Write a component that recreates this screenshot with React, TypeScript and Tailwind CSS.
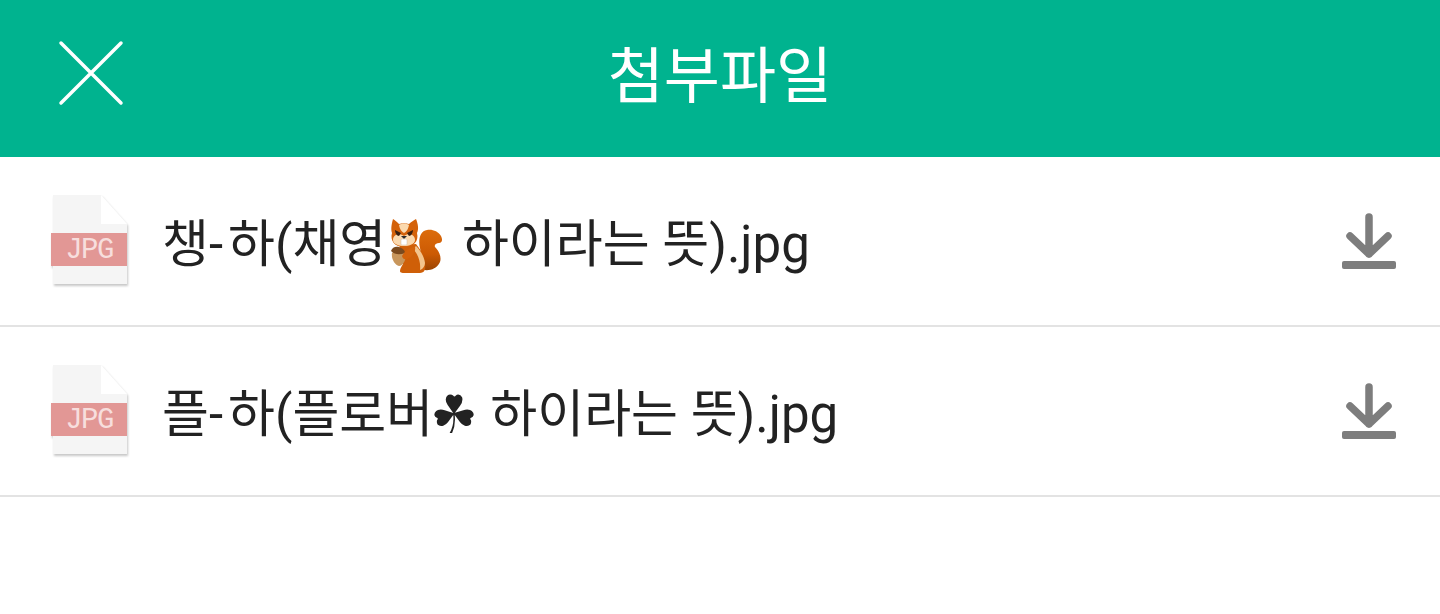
const kr = "font-['Roboto','Noto_Sans_CJK_KR',sans-serif]";

function FileIcon() {
  return (
    <div className="relative h-[92px] w-[80px] shrink-0">
      <svg width="80" height="92" viewBox="0 0 80 92" className="absolute left-0 top-0 drop-shadow-[1px_2px_1px_rgba(0,0,0,0.22)]">
        <path d="M3 0H51L77 29V89H3Z" fill="#f5f5f5" />
        <path d="M51 0L77 29H51Z" fill="#ffffff" />
        <rect x="1" y="38" width="76" height="33" fill="#e29795" />
      </svg>
      <span className="absolute left-0 top-[39px] flex h-[33px] w-[78px] items-center justify-center font-['Liberation_Mono',monospace] text-[29px] leading-none tracking-[-1.5px] text-[#f7dedd]">
        JPG
      </span>
    </div>
  );
}

function DownloadIcon() {
  return (
    <svg width="56" height="60" viewBox="0 0 56 60" className="shrink-0 blur-[0.6px]">
      <path d="M28 6V43M9 25L28 43L47 25" fill="none" stroke="#7d7d7d" strokeWidth="7.5" strokeLinecap="round" strokeLinejoin="round" />
      <rect x="1" y="50" width="54" height="8" rx="2" fill="#7d7d7d" />
    </svg>
  );
}

function Squirrel() {
  return (
    <svg width="54" height="56" viewBox="0 0 54 56" className="ml-[4px] mr-[5px] mt-[3px] shrink-0">
      <defs>
        <linearGradient id="tail" x1="0" y1="0" x2="0" y2="1">
          <stop offset="0" stopColor="#dc6c0c" />
          <stop offset="0.6" stopColor="#cc5a04" />
          <stop offset="1" stopColor="#9a4402" />
        </linearGradient>
      </defs>
      <path d="M30 50C34 54 46 53 50 44C52 38 48 32 45 29C44 27 46 25 49 25C52 25 53 22 51 18C48 13 42 11 37 12C30 13 28 22 30 30C32 38 31 44 30 50Z" fill="url(#tail)" />
      <path d="M10 27C8 34 11 42 13 46C12 48 10 50 10 53C10 55 13 55 16 55H30C34 55 36 52 35 46C34 38 31 32 26 26Z" fill="#cf5f08" />
      <path d="M23 31C28 36 31 44 30 52C33 51 35 48 35 45C34 38 30 32 26 28Z" fill="#f3c48d" />
      <path d="M3 1C1 8 1 12 2 15C0 22 4 29 14 29C24 29 29 23 27 15C29 11 28 6 26 1C24 2 21 4 19 6C16 5 12 5 9 6C7 4 5 2 3 1Z" fill="#d4620a" />
      <path d="M3 22C3 16 10 15 14 18C18 15 25 16 25 22C25 26 19 28 14 28C9 28 3 26 3 22Z" fill="#fbd9ae" />
      <path d="M9 7C12 5 16 5 19 7C18 12 16 14 14 15C12 14 10 12 9 7Z" fill="#fbd9ae" />
      <path d="M5 12L11 15L9 18C7 18 5 15 5 12ZM23 12L17 15L19 18C21 18 23 15 23 12Z" fill="#3a2010" />
      <path d="M11 18H17L14 21Z" fill="#2a2a2a" />
      <rect x="11" y="21" width="6" height="6" rx="1" fill="#ffffff" stroke="#c9b9a5" strokeWidth="0.5" />
      <path d="M2 35C5 33 12 33 16 36C16 42 13 48 9 48C5 47 1 41 2 35Z" fill="#c8965c" />
      <path d="M1 33C2 29 6 28 9 29C12 30 15 32 15 35C10 37 5 37 1 33Z" fill="#7b4a1e" />
      <path d="M12 38C15 33 19 29 25 29C26 33 23 38 19 40C16 42 13 42 12 38Z" fill="#d4620a" />
    </svg>
  );
}

function Row({ first, rest, icon, tail }: { first: string; rest: string; icon: React.ReactNode; tail: string }) {
  return (
    <div className="flex h-[170px] items-center border-b-2 border-[#e3e3e3] pl-[50px] pr-[43px]">
      <FileIcon />
      <div className={`ml-[32px] mt-[6px] flex flex-1 items-center whitespace-pre text-[51px] leading-none text-[#222222] ${kr}`}>
        <span>{first}</span>
        <span className="ml-[5px]">{rest}</span>
        {icon}
        <span>{tail}</span>
      </div>
      <DownloadIcon />
    </div>
  );
}

export default function App() {
  return (
    <main className="h-[614px] w-[1440px] overflow-hidden bg-white">
      <header className="relative flex h-[157px] items-center justify-center bg-[#00b38f]">
        <svg width="66" height="66" viewBox="0 0 66 66" className="absolute left-[58px] top-[40px]">
          <path d="M3 3L63 63M63 3L3 63" stroke="#ffffff" strokeWidth="3.5" strokeLinecap="round" />
        </svg>
        <h1 className={`mb-[3px] text-[61px] font-normal leading-none text-white ${kr}`}>첨부파일</h1>
      </header>
      <Row first="챙-" rest="하(채영" icon={<Squirrel />} tail=" 하이라는 뜻).jpg" />
      <Row
        first="플-"
        rest="하(플로버"
        icon={<span className="ml-[-3px] font-['DejaVu_Sans',sans-serif] text-[53px]">☘</span>}
        tail=" 하이라는 뜻).jpg"
      />
    </main>
  );
}
